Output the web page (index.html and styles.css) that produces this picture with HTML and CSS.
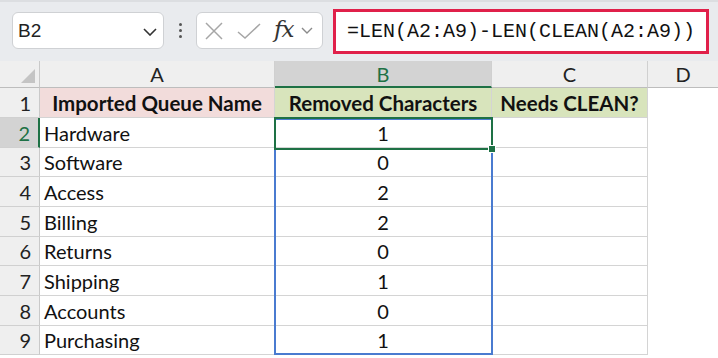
FILE: index.html
```html
<!DOCTYPE html>
<html>
<head>
<meta charset="utf-8">
<link rel="stylesheet" href="styles.css">
</head>
<body>
<div class="app">
  <div class="toolbar">
    <div class="namebox">
      <span class="nb-text">B2</span>
      <svg class="chev" width="14" height="8" viewBox="0 0 14 8"><path d="M1 1 L7 7 L13 1" fill="none" stroke="#333" stroke-width="1.6"/></svg>
    </div>
    <div class="dots"><i></i><i></i><i></i></div>
    <div class="fxbox">
      <svg width="18" height="18" viewBox="0 0 18 18"><path d="M1 1 L17 17 M17 1 L1 17" stroke="#a6a6a6" stroke-width="1.5" fill="none"/></svg>
      <svg width="24" height="16" viewBox="0 0 24 16"><path d="M1 9 L8 15 L23 1" stroke="#a6a6a6" stroke-width="1.5" fill="none"/></svg>
      <span class="fx">fx</span>
      <svg width="12" height="7" viewBox="0 0 12 7"><path d="M1 1 L6 6 L11 1" fill="none" stroke="#8a8a8a" stroke-width="1.4"/></svg>
    </div>
    <div class="formula">=LEN(A2:A9)-LEN(CLEAN(A2:A9))</div>
  </div>
  <div class="sheet">
    <div class="corner"><span class="tri"></span></div>
    <div class="ch">A</div>
    <div class="ch sel">B</div>
    <div class="ch">C</div>
    <div class="ch last">D</div>

    <div class="rh">1</div>
    <div class="c hdr pink">Imported Queue Name</div>
    <div class="c hdr green">Removed Characters</div>
    <div class="c hdr green">Needs CLEAN?</div>
    <div class="c empty"></div>

    <div class="rh sel">2</div>
    <div class="c">Hardware</div>
    <div class="c num">1</div>
    <div class="c"></div>
    <div class="c empty"></div>

    <div class="rh">3</div>
    <div class="c">Software</div>
    <div class="c num">0</div>
    <div class="c"></div>
    <div class="c empty"></div>

    <div class="rh">4</div>
    <div class="c">Access</div>
    <div class="c num">2</div>
    <div class="c"></div>
    <div class="c empty"></div>

    <div class="rh">5</div>
    <div class="c">Billing</div>
    <div class="c num">2</div>
    <div class="c"></div>
    <div class="c empty"></div>

    <div class="rh">6</div>
    <div class="c">Returns</div>
    <div class="c num">0</div>
    <div class="c"></div>
    <div class="c empty"></div>

    <div class="rh">7</div>
    <div class="c">Shipping</div>
    <div class="c num">1</div>
    <div class="c"></div>
    <div class="c empty"></div>

    <div class="rh">8</div>
    <div class="c">Accounts</div>
    <div class="c num">0</div>
    <div class="c"></div>
    <div class="c empty"></div>

    <div class="rh">9</div>
    <div class="c">Purchasing</div>
    <div class="c num">1</div>
    <div class="c"></div>
    <div class="c empty"></div>

    <div class="range"></div>
    <div class="active"><span class="handle"></span></div>
  </div>
</div>
</body>
</html>
```

FILE: styles.css
```css
html, body {
  margin: 0;
  padding: 0;
  background: #ffffff;
}
.app {
  width: 718px;
  height: 358px;
  overflow: hidden;
  font-family: "Lato", "Liberation Sans", sans-serif;
}
.toolbar {
  height: 61px;
  box-sizing: border-box;
  background: #e9ebee;
  border-top: 2px solid #dcdee1;
  display: flex;
  align-items: flex-start;
  padding: 10px 0 0 12px;
}
.namebox {
  width: 152px;
  height: 37px;
  box-sizing: border-box;
  background: #fff;
  border: 1px solid #cfd1d4;
  border-radius: 6px;
  display: flex;
  align-items: center;
  justify-content: space-between;
  padding: 0 6px 0 5px;
  font-family: "Liberation Sans", sans-serif;
  font-size: 19px;
  color: #222;
}
.chev { margin-top: 2px; }
.dots {
  width: 32px;
  height: 37px;
  display: flex;
  flex-direction: column;
  align-items: center;
  justify-content: center;
  gap: 3px;
}
.dots i {
  display: block;
  width: 3px;
  height: 3px;
  border-radius: 50%;
  background: #555;
}
.fxbox {
  width: 127px;
  height: 37px;
  box-sizing: border-box;
  background: #fff;
  border: 1px solid #cfd1d4;
  border-radius: 6px;
  display: flex;
  align-items: center;
  padding: 0 0 0 8px;
}
.fxbox svg:nth-child(1) { margin-right: 14px; }
.fxbox svg:nth-child(2) { margin-right: 13px; }
.fx {
  font-family: "DejaVu Serif", "Liberation Serif", serif;
  font-style: italic;
  font-size: 23px;
  color: #333;
  margin-right: 8px;
  line-height: 1;
  margin-top: -3px;
  letter-spacing: -1px;
}
.formula {
  margin-left: 10px;
  margin-top: -3px;
  width: 376px;
  height: 45px;
  box-sizing: border-box;
  background: #fff;
  border: 3px solid #e0204a;
  font-family: "Liberation Mono", monospace;
  font-size: 20px;
  color: #111;
  display: flex;
  align-items: center;
  padding-left: 11px;
  white-space: nowrap;
}
.sheet {
  position: relative;
  display: grid;
  grid-template-columns: 40px 235px 217px 156px 1fr;
  grid-template-rows: 27px 30px 30px 29px 30px 30px 29px 30px 30px 29px;
  font-size: 20px;
  color: #111;
}
.corner {
  background: #efefef;
  border-right: 1px solid #c9c9c9;
  border-bottom: 1px solid #bdbdbd;
  position: relative;
}
.tri {
  position: absolute;
  right: 4px;
  bottom: 4px;
  width: 0;
  height: 0;
  border-left: 14px solid transparent;
  border-bottom: 14px solid #c4c4c4;
}
.ch {
  background: #efefef;
  border-right: 1px solid #d0d0d0;
  border-bottom: 1px solid #bdbdbd;
  display: flex;
  align-items: center;
  justify-content: center;
  color: #222;
  font-size: 20px;
}
.ch.last { border-right: none; }
.ch.sel {
  background: #d3d3d3;
  color: #1e7145;
  border-bottom: 2px solid #1e7145;
}
.rh {
  background: #efefef;
  border-right: 1px solid #c9c9c9;
  border-bottom: 1px solid #d0d0d0;
  display: flex;
  align-items: center;
  justify-content: flex-end;
  padding-right: 8px;
  color: #222;
}
.rh.sel {
  background: #d3d3d3;
  color: #1e7145;
  border-right: 2px solid #1e7145;
}
.c {
  border-right: 1px solid #d4d4d4;
  border-bottom: 1px solid #d4d4d4;
  display: flex;
  align-items: center;
  padding-left: 4px;
  white-space: nowrap;
  overflow: hidden;
}
.c.empty { border-right: none; border-bottom: none; }
.c.num { justify-content: center; padding-left: 0; }
.hdr {
  font-weight: 700;
  font-size: 20.5px;
  justify-content: center;
  padding-left: 0;
}
.pink { background: #f2dcdb; }
.green { background: #d8e4bc; }
.range {
  position: absolute;
  left: 274px;
  top: 57px;
  width: 219px;
  height: 237px;
  box-sizing: border-box;
  border: 2px solid #4a7bd0;
  pointer-events: none;
}
.active {
  position: absolute;
  left: 274px;
  top: 56px;
  width: 219px;
  height: 33px;
  box-sizing: border-box;
  border: 2px solid #1e7145;
  pointer-events: none;
}
.handle {
  position: absolute;
  right: -5px;
  bottom: -5px;
  width: 6px;
  height: 6px;
  background: #1e7145;
  border: 1px solid #fff;
}
```
